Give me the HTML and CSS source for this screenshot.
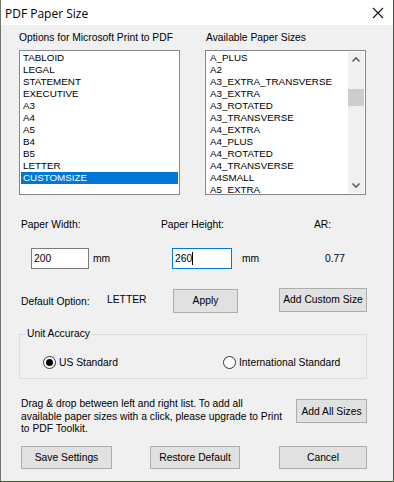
FILE: index.html
```html
<!DOCTYPE html>
<html>
<head>
<meta charset="utf-8">
<link rel="stylesheet" href="styles.css">
</head>
<body>
<div class="window">
  <div class="titlebar">
    <span class="title">PDF Paper Size</span>
    <svg class="close" width="12" height="12" viewBox="0 0 12 12"><path d="M1 1L11 11M11 1L1 11" stroke="#111" stroke-width="1.1" fill="none"/></svg>
  </div>
  <div class="content">
    <div class="lists">
      <div class="col">
        <div class="label">Options for Microsoft Print to PDF</div>
        <ul class="listbox left">
          <li>TABLOID</li>
          <li>LEGAL</li>
          <li>STATEMENT</li>
          <li>EXECUTIVE</li>
          <li>A3</li>
          <li>A4</li>
          <li>A5</li>
          <li>B4</li>
          <li>B5</li>
          <li>LETTER</li>
          <li class="sel">CUSTOMSIZE</li>
        </ul>
      </div>
      <div class="col">
        <div class="label l2">Available Paper Sizes</div>
        <div class="listbox right">
          <ul class="items">
            <li>A_PLUS</li>
            <li>A2</li>
            <li>A3_EXTRA_TRANSVERSE</li>
            <li>A3_EXTRA</li>
            <li>A3_ROTATED</li>
            <li>A3_TRANSVERSE</li>
            <li>A4_EXTRA</li>
            <li>A4_PLUS</li>
            <li>A4_ROTATED</li>
            <li>A4_TRANSVERSE</li>
            <li>A4SMALL</li>
            <li>A5_EXTRA</li>
          </ul>
          <div class="scrollbar">
            <svg class="arrow" width="16" height="16" viewBox="0 0 16 16"><path d="M4.5 9.5L8 6L11.5 9.5" stroke="#606060" stroke-width="1.6" fill="none"/></svg>
            <div class="track"><div class="thumb"></div></div>
            <svg class="arrow" width="16" height="16" viewBox="0 0 16 16"><path d="M4.5 6.5L8 10L11.5 6.5" stroke="#606060" stroke-width="1.6" fill="none"/></svg>
          </div>
        </div>
      </div>
    </div>

    <div class="fields">
      <div class="fcol c1">
        <div class="flabel">Paper Width:</div>
        <div class="fline">
          <div class="input">200</div>
          <span class="unit">mm</span>
        </div>
      </div>
      <div class="fcol c2">
        <div class="flabel">Paper Height:</div>
        <div class="fline">
          <div class="input focus">260<span class="caret"></span></div>
          <span class="unit">mm</span>
        </div>
      </div>
      <div class="fcol c3">
        <div class="flabel">AR:</div>
        <div class="fline"><span class="ar">0.77</span></div>
      </div>
    </div>

    <div class="defrow">
      <span class="deflabel">Default Option:</span>
      <span class="defval">LETTER</span>
      <button class="btn apply">Apply</button>
      <button class="btn addcustom">Add Custom Size</button>
    </div>

    <fieldset class="group">
      <legend>Unit Accuracy</legend>
      <div class="radios">
        <span class="radio us"><span class="dot checked"></span>US Standard</span>
        <span class="radio intl"><span class="dot"></span>International Standard</span>
      </div>
    </fieldset>

    <div class="inforow">
      <p class="info">Drag &amp; drop between left and right list. To add all<br>available paper sizes with a click, please upgrade to Print<br>to PDF Toolkit.</p>
      <button class="btn addall">Add All Sizes</button>
    </div>

    <div class="bottom">
      <button class="btn save">Save Settings</button>
      <button class="btn restore">Restore Default</button>
      <button class="btn cancel">Cancel</button>
    </div>
  </div>
</div>
</body>
</html>
```

FILE: styles.css
```css
* { box-sizing: border-box; }
html, body { margin: 0; padding: 0; }
body {
  width: 394px;
  height: 482px;
  overflow: hidden;
  background: #4a5746;
  font-family: "Liberation Sans", Arial, sans-serif;
  font-size: 10.3px;
  color: #000;
}
.window {
  width: 393px;
  height: 481px;
  margin-left: 0;
  border-left: 1px solid #6d7868;
  background: #f0f0f0;
}
.titlebar {
  height: 25px;
  background: #fff;
  display: flex;
  align-items: center;
  justify-content: space-between;
  padding: 0 9px 0 4px;
}
.title {
  font-family: "Open Sans", "Noto Sans", sans-serif;
  font-size: 12px;
  color: #000;
  margin-top: 1px;
}
.close { display: block; margin-top: 1px; }
.content {
  padding: 7px 0 0 18px;
}
.lists {
  display: flex;
  gap: 25px;
}
.col { display: flex; flex-direction: column; }
.label {
  height: 12px;
  line-height: 12px;
  margin-bottom: 6px;
  padding-left: 0;
}
.label.l2 { padding-left: 1px; }
.listbox {
  margin: 0;
  list-style: none;
  height: 145px;
  border: 1px solid #828790;
  background: #fff;
  overflow: hidden;
}
.listbox.left {
  width: 161px;
  padding: 1px 1px;
}
.listbox li {
  height: 12px;
  line-height: 12px;
  font-size: 9.8px;
  white-space: nowrap;
}
.listbox.left li { padding-left: 2px; }
.listbox li.sel {
  background: #0078d7;
  color: #fff;
}
.listbox.right {
  width: 161px;
  display: flex;
  padding: 1px 1px 1px 1px;
}
.items {
  margin: 0;
  padding: 0 0 0 3px;
  list-style: none;
  flex: 1;
  overflow: hidden;
}
.scrollbar {
  width: 16px;
  background: #f0f0f0;
  display: flex;
  flex-direction: column;
}
.arrow { display: block; flex: none; }
.track { flex: 1; padding-top: 21px; }
.thumb { height: 17px; background: #cdcdcd; }

.fields {
  display: flex;
  margin-top: 24px;
}
.fcol { display: flex; flex-direction: column; }
.fcol.c1 { width: 142px; padding-left: 2px; }
.fcol.c2 { width: 153px; }
.flabel { height: 12px; line-height: 12px; }
.fline {
  display: flex;
  align-items: center;
  margin-top: 17px;
  height: 21px;
}
.c1 .fline { padding-left: 10px; }
.c2 .fline { padding-left: 11px; }
.c3 .fline { padding-left: 11px; }
.input {
  width: 58px;
  height: 21px;
  border: 1px solid #7a7a7a;
  background: #fff;
  line-height: 19px;
  padding-left: 2px;
  display: flex;
  align-items: center;
}
.input.focus { width: 60px; border-color: #0078d7; }
.caret {
  display: inline-block;
  width: 1px;
  height: 13px;
  background: #000;
  margin-left: 0;
}
.unit { margin-left: 4px; }
.c2 .unit { margin-left: 10px; }

.defrow {
  display: flex;
  align-items: center;
  margin-top: 19px;
  height: 24px;
  padding-left: 2px;
}
.deflabel { width: 86px; padding-top: 2px; }
.defval { width: 66px; margin-top: -2px; }
.btn {
  font-family: "Liberation Sans", Arial, sans-serif;
  font-size: 10.3px;
  color: #000;
  background: #e1e1e1;
  border: 1px solid #adadad;
  height: 24px;
  padding: 0;
  margin: 0;
  display: flex;
  align-items: center;
  justify-content: center;
}
.apply { width: 65px; margin-top: 1px; }
.addcustom { width: 88px; margin-left: 41px; margin-top: -1px; }

.group {
  margin: 16px 0 0 0;
  width: 348px;
  height: 51px;
  border: 1px solid #dcdcdc;
  padding: 0 0 0 6px;
}
.group legend {
  padding: 0 1px;
  line-height: 12px;
  font-size: 10.3px;
}
.radios {
  display: flex;
  align-items: center;
  height: 13px;
  margin-top: 16px;
}
.radio { display: flex; align-items: center; }
.radio.us { margin-left: 17px; width: 180px; }
.dot {
  width: 13px;
  height: 13px;
  border: 1px solid #333;
  border-radius: 50%;
  background: #fff;
  margin-right: 3px;
  display: flex;
  align-items: center;
  justify-content: center;
}
.dot.checked::after {
  content: "";
  width: 7px;
  height: 7px;
  border-radius: 50%;
  background: #000;
}

.inforow {
  display: flex;
  align-items: flex-start;
  margin-top: 19px;
  padding-left: 2px;
}
.info {
  margin: 0;
  width: 275px;
  line-height: 12.5px;
  white-space: nowrap;
}
.addall { width: 71px; margin-top: 1px; }

.bottom {
  display: flex;
  margin-top: 10px;
  padding-left: 2px;
}
.save { width: 91px; height: 23px; }
.restore { width: 90px; height: 23px; margin-left: 38px; }
.cancel { width: 88px; height: 23px; margin-left: 39px; }
```
